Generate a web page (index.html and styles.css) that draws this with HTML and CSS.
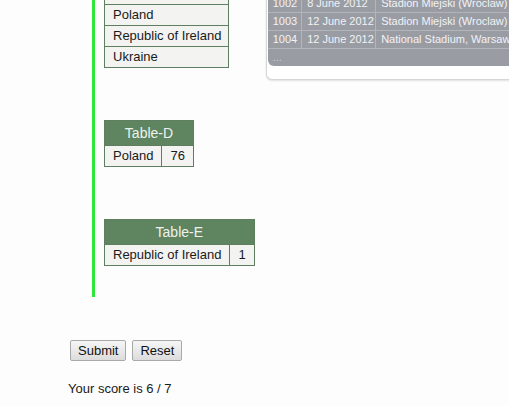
FILE: index.html
```html
<!DOCTYPE html>
<html>
<head>
<meta charset="utf-8">
<link rel="stylesheet" href="styles.css">
</head>
<body>
<div class="page">
  <div class="top">
    <div class="groups">
      <table class="grp">
        <tr><th>Table-C</th></tr>
        <tr><td class="left">Croatia</td></tr>
        <tr><td class="left">Poland</td></tr>
        <tr><td class="left">Republic of Ireland</td></tr>
        <tr><td class="left">Ukraine</td></tr>
      </table>
      <table class="grp">
        <tr><th colspan="2">Table-D</th></tr>
        <tr><td>Poland</td><td>76</td></tr>
      </table>
      <table class="grp">
        <tr><th colspan="2">Table-E</th></tr>
        <tr><td>Republic of Ireland</td><td>1</td></tr>
      </table>
    </div>
    <div class="panel">
      <table class="matches">
        <colgroup><col class="k1"><col class="k2"><col class="k3"></colgroup>
        <tr><td>ID</td><td>Date</td><td>Venue</td></tr>
        <tr><td>1002</td><td>8 June 2012</td><td>Stadion Miejski (Wroclaw)</td></tr>
        <tr><td>1003</td><td>12 June 2012</td><td>Stadion Miejski (Wroclaw)</td></tr>
        <tr><td>1004</td><td>12 June 2012</td><td>National Stadium, Warsaw</td></tr>
        <tr><td class="more" colspan="3">...</td></tr>
      </table>
    </div>
  </div>
  <form class="actions">
    <button type="button" class="btn">Submit</button>
    <button type="reset" class="btn">Reset</button>
  </form>
  <p class="score">Your score is 6 / 7</p>
</div>
</body>
</html>
```
FILE: styles.css
```css
html, body {
  margin: 0;
  padding: 0;
  overflow: hidden;
  background: #fdfdfd;
}
body {
  font-family: "Liberation Sans", Arial, sans-serif;
  font-size: 13px;
  color: #1a1a1a;
}
.page {
  margin-top: -42px;
}
.top {
  display: flex;
  align-items: flex-start;
}
.groups {
  flex-shrink: 0;
  margin-left: 92px;
  border-left: 3px solid #2fe63a;
  padding-left: 9px;
  padding-bottom: 31px;
  display: flex;
  flex-direction: column;
  align-items: flex-start;
  gap: 52px;
  white-space: nowrap;
}
.grp {
  border-collapse: collapse;
  border: 1px solid #5f7d5f;
}
.grp th {
  background: #5e8560;
  color: #eef2ee;
  font-weight: normal;
  font-size: 14px;
  line-height: 16px;
  padding: 4px 8px;
  height: 16px;
  border: 1px solid #5f7d5f;
}
.grp td {
  background: #f3f3f1;
  border: 1px solid #5f7d5f;
  padding: 2px 8px;
  line-height: 16px;
  height: 16px;
  text-align: center;
}
.grp td.left {
  text-align: left;
  padding-right: 7px;
}
.panel {
  margin-left: 11px;
  margin-top: 17px;
  width: 270px;
  background: #ffffff;
  border: 1px solid #d6d6d6;
  border-right: none;
  border-radius: 6px 0 0 6px;
  padding: 1px 0 13px 1px;
  box-shadow: 0 1px 2px rgba(0,0,0,0.12);
  flex-shrink: 0;
}
.matches {
  width: 100%;
  table-layout: fixed;
  border-collapse: collapse;
  background: #9a9ca4;
  color: #f2f2f4;
  font-size: 11px;
  border-radius: 0 0 0 6px;
  overflow: hidden;
  white-space: nowrap;
}
.k1 { width: 34px; }
.k2 { width: 74px; }
.matches td {
  height: 13px;
  line-height: 13px;
  padding: 2px 4px 2px 5px;
  border-bottom: 1px solid #b3b5bb;
  border-right: 1px solid #b3b5bb;
  overflow: hidden;
}
.matches td.more {
  border: none;
  border-radius: 0 0 0 6px;
  color: #c8cad0;
}
.actions {
  margin: 43px 0 0 70px;
  display: flex;
  gap: 6px;
}
.btn {
  font-family: "Liberation Sans", Arial, sans-serif;
  font-size: 13px;
  color: #111;
  height: 21px;
  padding: 0 7px;
  margin: 0;
  border: 1px solid #a8a8a8;
  border-radius: 2px;
  background: linear-gradient(#f6f6f6, #dcdcdc);
}
.score {
  margin: 20px 0 0 68px;
  line-height: 16px;
  font-size: 13px;
  color: #1a1a1a;
}
```
